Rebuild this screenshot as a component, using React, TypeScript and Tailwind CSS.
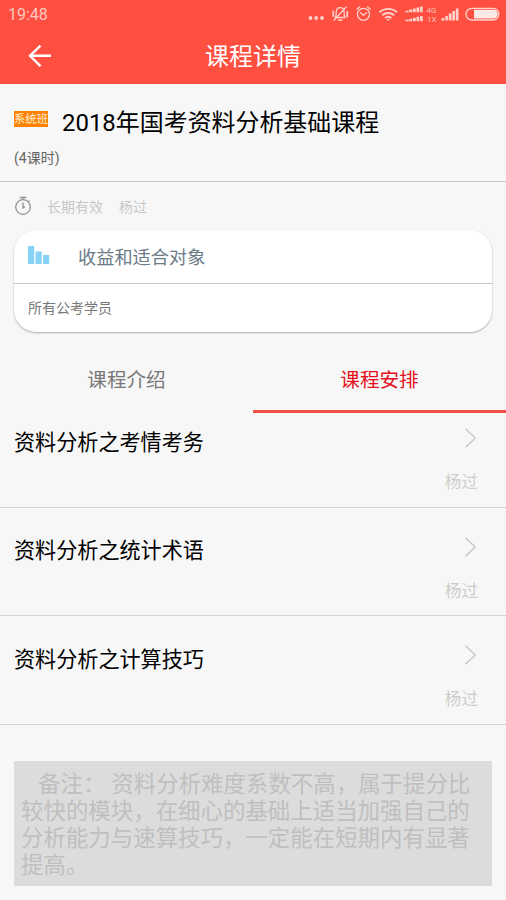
import React from "react";

const lessons = ["资料分析之考情考务", "资料分析之统计术语", "资料分析之计算技巧"];

const noteLines = [
  "较快的模块，在细心的基础上适当加强自己的",
  "分析能力与速算技巧，一定能在短期内有显著",
  "提高。",
];

function StatusIcons() {
  return (
    <svg width="206" height="30" viewBox="0 0 206 30" fill="none" stroke="#ffd2cc" strokeWidth="1.3">
      <g fill="#ffd2cc" stroke="none">
        <circle cx="10.5" cy="18" r="1.9" />
        <circle cx="16.2" cy="18" r="1.9" />
        <circle cx="22" cy="18" r="1.9" />
      </g>
      {/* muted bell */}
      <g strokeLinecap="round" strokeLinejoin="round">
        <path d="M35.300 17.500c1-1.300 1-2.800 1-5 0-2.800 1.500-4.800 3.900-4.800s3.900 2 3.900 4.800c0 2.200 0 3.700 1 5z" />
        <path d="M38.500 20h3.400M34 20.300L46.200 7" />
        <path d="M33.300 11.500v4.500M47.200 12v4.500" strokeWidth="1.800" />
      </g>
      {/* alarm clock */}
      <g strokeLinecap="round">
        <circle cx="63.500" cy="14.300" r="6" />
        <path d="M60.500 12.800l3 2.600 3-2.600M56.800 9.300l2.700-2.300M70.200 9.300l-2.700-2.300" />
      </g>
      {/* wifi */}
      <g strokeWidth="1.900">
        <path d="M79.500 12.300c5-4.600 12.500-4.600 17.500 0" />
        <path d="M82.300 15.300c3.500-3 8.400-3 11.900 0" />
        <path d="M85 18.100c2-1.700 4.500-1.700 6.500 0" />
        <path d="M86.300 19.200h3.900l-1.950 1.900z" fill="#ffd2cc" stroke="none" />
      </g>
      {/* dual sim and main signal */}
      <g fill="#ffd2cc" stroke="none">
        <path d="M105.500 10.700h3.200v1.600h-3.200zM109.300 9.500h3v2.800h-3zM113 8.500h2.800v3.800H113zM116.500 7.500h2.700v4.800h-2.700zM120 6.500h2.700v5.800H120z" />
        <path d="M105.500 19.700h3.200v1.600h-3.200zM109.300 18.700h3v2.600h-3zM113 17.800h2.800v3.500H113zM116.500 16.800h2.700v4.500h-2.700zM120 16h2.700v5.300H120z" />
        <path d="M141.500 18h2.700v2.500h-2.700zM145.200 16h2.700v4.500h-2.700zM148.800 13.500h2.700v7h-2.700zM152.300 11h2.700v9.500h-2.700zM155.800 8.500h2.700v12h-2.700z" />
      </g>
      <g fill="#ffc0b8" stroke="none" fontFamily="Roboto, sans-serif" fontSize="8">
        <text x="126.500" y="12.800">4G</text>
        <text x="127" y="21.500">1X</text>
      </g>
      <rect x="166" y="8.300" width="32.800" height="11.700" rx="5.800" />
      <path d="M174 9.800h19.300a4.350 4.350 0 0 1 0 8.700H174z" fill="#ffe9e6" stroke="none" />
    </svg>
  );
}

export default function App() {
  return (
    <div className="flex h-[900px] w-[506px] flex-col overflow-hidden whitespace-nowrap bg-[#f7f7f7] font-[Roboto,'Noto_Sans_CJK_SC',sans-serif]">
      <header className="h-[84px] shrink-0 bg-[#ff4f40]">
        <div className="flex h-[30px] justify-between pl-2">
          <span className="text-[16px] leading-[30px] text-[#ffc9c2]">19:48</span>
          <StatusIcons />
        </div>
        <div className="grid h-[54px] grid-cols-[1fr_auto_1fr] items-center">
          <svg className="ml-7" width="24" height="24" viewBox="0 0 24 24" fill="none" stroke="#fff" strokeWidth="2.400">
            <path d="M23 10.800H2.500M12.500 .6L2 10.800l10.500 10.300" />
          </svg>
          <h1 className="pt-px text-[24px] leading-[53px] text-white">课程详情</h1>
        </div>
      </header>

      <section className="h-[98px] shrink-0 border-b border-[#c8c8c8] px-3.5 pt-[22px]">
        <div className="flex h-[34px] items-center">
          <span className="mb-2 h-[16px] w-[34px] bg-[#ff8200] text-center text-[11.300px] leading-[17px] text-[#fff0dc]">系统班</span>
          <h2 className="ml-[14px] text-[23.950px] leading-[34px] text-black">2018年国考资料分析基础课程</h2>
        </div>
        <p className="mt-2 text-[14px] leading-[20px] text-[#666]">(4课时)</p>
      </section>

      <section className="flex h-[48px] shrink-0 items-center pl-3.5 text-[14px] text-[#c8c8c8]">
        <svg width="18" height="20" viewBox="0 0 18 20" fill="none" stroke="#929292" strokeWidth="1.300">
          <circle cx="9" cy="11" r="7.300" />
          <path d="M5.800 1.500h6.500M9 1.500v2M9 6.500V12l2-1.500M14.500 4.500l1 1" />
        </svg>
        <span className="ml-[15px] pt-0.5">长期有效</span>
        <span className="ml-4 pt-0.5">杨过</span>
      </section>

      <section className="mx-3.5 h-[102px] shrink-0 rounded-[22px] bg-white shadow-[0_1px_2px_rgba(0,0,0,0.3)]">
        <div className="flex h-[54px] items-center border-b border-[#c8c8c8] pl-3.5">
          <svg width="22" height="20" viewBox="0 0 22 20" fill="#86d1f6" className="mb-1">
            <path d="M0 1h6.200v18H0zM7.500 6.500h6.200V19H7.500zM15 10h6.200v9H15z" />
          </svg>
          <span className="ml-7 pt-0.5 text-[18.200px] text-[#6c7b88]">收益和适合对象</span>
        </div>
        <p className="pl-3.5 text-[14px] leading-[49px] text-[#777]">所有公考学员</p>
      </section>

      <nav className="mt-4 grid h-[65px] shrink-0 grid-cols-2 text-center text-[19.600px] leading-[61px]">
        <span className="h-[65px] pt-[2px] text-[#777]">课程介绍</span>
        <span className="h-[65px] border-b-[3px] border-[#ef4f45] pt-[2px] text-[#e5101c]">课程安排</span>
      </nav>

      <main className="-mt-[14px] shrink-0">
        {lessons.map((lesson) => (
          <article key={lesson} className="h-[108.700px] border-b border-[#d2d2d2] pl-3.5 pr-7 pt-[14px]">
            <div className="flex h-[56px] items-center justify-between">
              <h3 className="pt-[3px] text-[21.100px] leading-[58px] text-black">{lesson}</h3>
              <svg width="14" height="20" viewBox="0 0 14 20" fill="none" stroke="#c5c5c5" strokeWidth="1.300" className="mb-1.5">
                <path d="M1.500 .7L11.300 10l-9.800 9.300" />
              </svg>
            </div>
            <p className="text-right text-[16.600px] leading-[28px] text-[#cdcdcd]">杨过</p>
          </article>
        ))}
      </main>

      <aside className="mx-3.5 mt-[36px] h-[125px] shrink-0 bg-[#dcdcdc] pl-[7px] pt-[10px] text-[22.450px] leading-[27px] text-[#bfbfbf]">
        <p className="flex pl-[17px]"><span>备注：</span><span className="ml-[6px]">资料分析难度系数不高，属于提分比</span></p>
        {noteLines.map((line) => <p key={line}>{line}</p>)}
      </aside>
    </div>
  );
}
